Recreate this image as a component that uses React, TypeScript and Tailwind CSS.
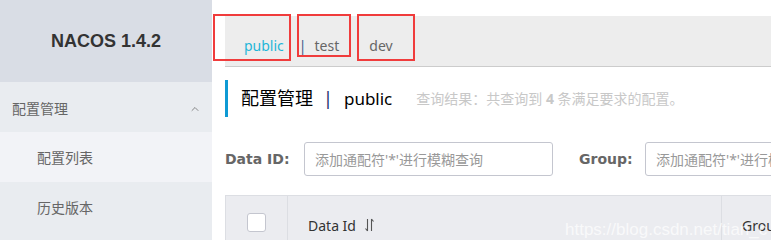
import { ChevronUp } from "lucide-react";

const cjk = "font-['Noto_Sans','Noto_Sans_CJK_SC',sans-serif]";

function Sidebar() {
  return (
    <aside className={`w-[212px] shrink-0 bg-[#e9ecf0] ${cjk}`}>
      <div className="flex h-[82px] items-center justify-center bg-[#d9dde5]">
        <span className="font-['Liberation_Sans',sans-serif] text-[18px] font-bold text-[#333]">NACOS 1.4.2</span>
      </div>
      <div className="flex h-[50px] items-center justify-between pl-[12px] pr-[11px] pt-[3px] text-[14px] text-[#666]">
        <span>配置管理</span>
        <ChevronUp size={12} strokeWidth={1.5} className="text-[#666]" />
      </div>
      <div className="flex h-[50px] items-center bg-[#f2f3f7] pl-[37px] text-[14px] text-[#666]">配置列表</div>
      <div className="flex h-[50px] items-center pl-[37px] text-[14px] text-[#666]">历史版本</div>
      <div className="h-[8px]" />
    </aside>
  );
}

function Tabs() {
  return (
    <div className="relative">
      <div className="flex h-[51px] items-end border-b border-[#cccccc] bg-[#ededed] pb-[10px] text-[14px]">
        <span className="ml-[19px] text-[#1fb6d8]">public</span>
        <span className="ml-[15px] text-[#3a5a8a]">|</span>
        <span className="ml-[8px] text-[#666]">test</span>
        <span className="ml-[30px] text-[#666]">dev</span>
      </div>
      <div className="absolute left-[-12px] top-[-2px] h-[47px] w-[78px] border-2 border-[#f03c3c]" />
      <div className="absolute left-[72px] top-[-2px] h-[43px] w-[54px] border-2 border-[#f03c3c]" />
      <div className="absolute left-[132px] top-[-2px] h-[47px] w-[58px] border-2 border-[#f03c3c]" />
    </div>
  );
}

function SearchInput() {
  return (
    <div className="flex h-[34px] w-[249px] shrink-0 items-center overflow-hidden rounded-[3px] border border-[#c4c6cf] bg-white pl-[10px] text-[14px] whitespace-nowrap text-[#999]">
      添加通配符'*'进行模糊查询
    </div>
  );
}

function SortIcon() {
  return (
    <svg width="9" height="14" viewBox="0 0 9 14" className="ml-[9px] mt-[3px]" fill="none" stroke="#555" strokeWidth="1.1">
      <path d="M2.5 1v12M2.5 13L0.5 10.5" />
      <path d="M6.5 13V1M6.5 1l2 2.5" />
    </svg>
  );
}

export default function App() {
  return (
    <div className={`flex h-[240px] w-[771px] overflow-hidden bg-white ${cjk}`}>
      <Sidebar />
      <main className="relative min-w-0 flex-1 pl-[13px] pt-[16px]">
        <Tabs />
        <div className="mt-[13px] flex h-[37px] items-center border-l-[3px] border-[#0e9ad4] pl-[13px] whitespace-nowrap">
          <span className="text-[18px] text-black">配置管理</span>
          <span className="ml-[10px] text-[18px] text-[#1a2a6a]">|</span>
          <span className="ml-[11px] text-[17px] text-black">public</span>
          <span className="ml-[24px] text-[14px] text-[#c8c8c8]">
            查询结果：共查询到 <b className="font-bold">4</b> 条满足要求的配置。
          </span>
        </div>
        <div className="mt-[25px] flex h-[34px] items-center whitespace-nowrap">
          <span className="w-[79px] shrink-0 font-['DejaVu_Sans',sans-serif] text-[14px] font-bold text-[#666]">Data ID:</span>
          <SearchInput />
          <span className="ml-[26px] w-[66px] shrink-0 font-['DejaVu_Sans',sans-serif] text-[14px] font-bold text-[#666]">Group:</span>
          <SearchInput />
        </div>
        <div className="mt-[19px] flex h-[60px] border-t border-l border-[#dcdee3] bg-[#ebecf0]">
          <div className="flex w-[62px] shrink-0 justify-center border-r border-[#dcdee3] pt-[17px]">
            <span className="h-[19px] w-[19px] rounded-[3px] border border-[#c4c6cf] bg-white" />
          </div>
          <div className="flex w-[434px] shrink-0 items-start border-r border-[#dcdee3] pl-[20px] pt-[19px] text-[14px] text-[#333]">
            Data Id
            <SortIcon />
          </div>
          <div className="pl-[20px] pt-[19px] text-[14px] text-[#333]">Group</div>
        </div>
        <span className="pointer-events-none absolute left-[353px] top-[217px] font-['Liberation_Sans',sans-serif] text-[17px] whitespace-nowrap text-white/70">
          https://blog.csdn.net/tian_c
        </span>
      </main>
    </div>
  );
}
